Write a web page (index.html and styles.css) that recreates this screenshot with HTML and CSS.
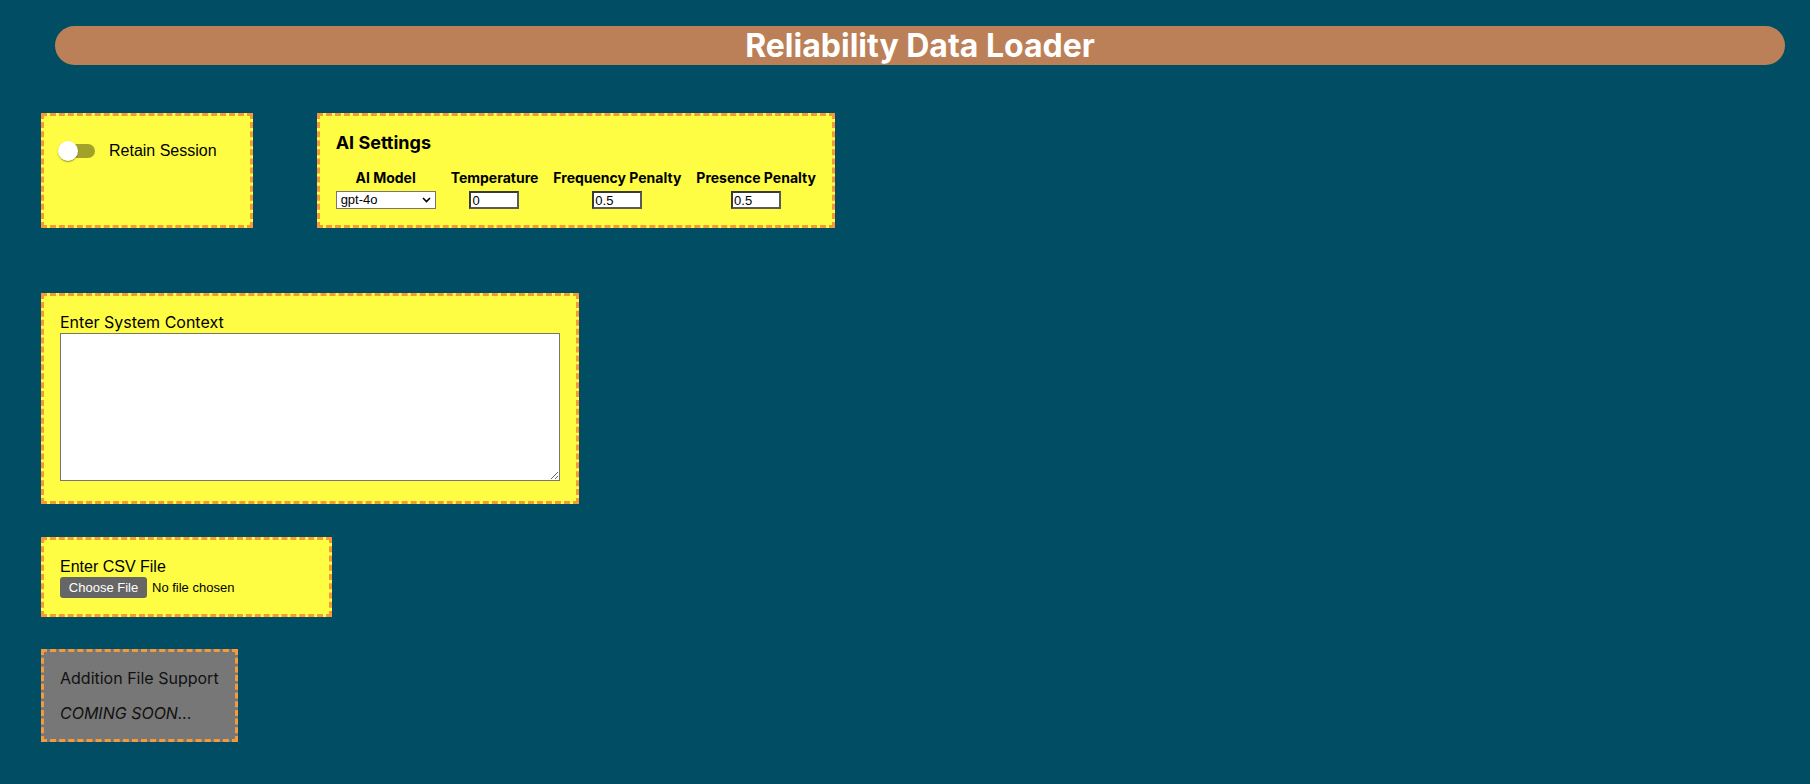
FILE: index.html
```html
<!DOCTYPE html>
<html lang="en">
<head>
<meta charset="utf-8">
<title>Reliability Data Loader</title>
<link rel="stylesheet" href="styles.css">
</head>
<body>
<header class="banner">
  <h1 class="banner-title">Reliability Data Loader</h1>
</header>
<main class="page">
  <div class="top-row">
    <section class="card card-session">
      <label class="switch-label">
        <span class="switch">
          <span class="switch-track"></span>
          <span class="switch-thumb"></span>
        </span>
        <span class="switch-text">Retain Session</span>
      </label>
    </section>
    <section class="card card-ai">
      <h3 class="ai-title">AI Settings</h3>
      <div class="ai-grid">
        <div class="ai-head">AI Model</div>
        <div class="ai-head">Temperature</div>
        <div class="ai-head">Frequency Penalty</div>
        <div class="ai-head">Presence Penalty</div>
        <select class="ai-select"><option>gpt-4o</option></select>
        <input class="ai-input" type="text" value="0">
        <input class="ai-input" type="text" value="0.5">
        <input class="ai-input" type="text" value="0.5">
      </div>
    </section>
  </div>
  <section class="card card-context">
    <div class="context-label">Enter System Context</div>
    <textarea class="context-text"></textarea>
  </section>
  <section class="card card-csv">
    <div class="csv-label">Enter CSV File</div>
    <div class="file-widget">
      <span class="file-button">Choose File</span>
      <span class="file-name">No file chosen</span>
    </div>
  </section>
  <section class="card card-soon">
    <div class="soon-label">Addition File Support</div>
    <p class="soon-text">COMING SOON...</p>
  </section>
</main>
</body>
</html>
```
FILE: styles.css
```css
html, body {
  margin: 0;
  padding: 0;
}
body {
  background: #014e64;
  min-height: 784px;
  font-family: "Inter", "Liberation Sans", sans-serif;
  color: #000;
}
.banner {
  margin: 26px 25px 0 55px;
  background: #bc8058;
  border-radius: 20px;
}
.banner-title {
  margin: 0;
  font-family: "Inter", sans-serif;
  font-weight: 700;
  font-size: 32px;
  line-height: 39px;
  color: #fff;
  text-align: center;
}
.page {
  display: flex;
  flex-direction: column;
  align-items: flex-start;
  padding: 48px 0 0 41px;
}
.top-row {
  display: flex;
  align-items: stretch;
  gap: 64px;
}
.card {
  background: #fefd44;
  border: 3px dashed #f6993a;
  padding: 16px;
}
.card-session {
  display: flex;
  align-items: flex-start;
}
.switch-label {
  display: inline-flex;
  align-items: center;
  margin-left: -11px;
  margin-right: 17px;
  font-family: "Liberation Sans", Arial, sans-serif;
  font-size: 16px;
  line-height: 24px;
}
.switch {
  display: inline-grid;
  width: 58px;
  height: 38px;
  flex: none;
}
.switch-track {
  grid-area: 1 / 1;
  margin: 12px;
  height: 14px;
  border-radius: 7px;
  background: rgba(0, 0, 0, 0.36);
}
.switch-thumb {
  grid-area: 1 / 1;
  justify-self: start;
  align-self: center;
  margin-left: 9px;
  width: 20px;
  height: 20px;
  border-radius: 50%;
  background: #fff;
  box-shadow: 0 2px 1px -1px rgba(0,0,0,0.2), 0 1px 1px 0 rgba(0,0,0,0.14), 0 1px 3px 0 rgba(0,0,0,0.12);
}
.switch-text {
  margin-left: 2px;
}
.ai-title {
  margin: 0 0 15px;
  font-size: 18px;
  line-height: 22px;
  font-weight: 700;
}
.ai-grid {
  display: grid;
  grid-template-columns: repeat(4, auto);
  column-gap: 15px;
  row-gap: 5px;
  justify-items: center;
}
.ai-head {
  font-size: 14px;
  font-weight: 700;
  line-height: 17px;
}
.ai-select {
  appearance: none;
  -webkit-appearance: none;
  box-sizing: border-box;
  width: 100px;
  height: 18px;
  margin: 0;
  padding: 0 4px;
  border: 1px solid #767676;
  border-radius: 0;
  background: #fff url("data:image/svg+xml,%3Csvg xmlns='http://www.w3.org/2000/svg' width='9' height='6' viewBox='0 0 9 6'%3E%3Cpath d='M1 1l3.5 3.5L8 1' fill='none' stroke='%23000' stroke-width='1.6'/%3E%3C/svg%3E") no-repeat right 4px center;
  font-family: "Liberation Sans", Arial, sans-serif;
  font-size: 13px;
  line-height: 16px;
  color: #000;
}
.ai-input {
  box-sizing: border-box;
  width: 50px;
  height: 18px;
  margin: 0;
  padding: 0 1px;
  border: 2px solid #3a3a3a;
  border-right-color: #5a5a5a;
  border-bottom-color: #5a5a5a;
  background: #fff;
  font-family: "Liberation Sans", Arial, sans-serif;
  font-size: 13px;
  color: #000;
}
.context-label {
  font-size: 16px;
  line-height: 21px;
}
.context-text {
  display: block;
  box-sizing: border-box;
  width: 500px;
  height: 148px;
  margin: 0 0 4px;
  border: 1px solid #767676;
  background: #fff;
  resize: both;
}
.card-context {
  margin-top: 65px;
}
.card-csv {
  margin-top: 33px;
  font-family: "Liberation Sans", Arial, sans-serif;
}
.csv-label {
  font-size: 16px;
  line-height: 21px;
}
.file-widget {
  display: flex;
  align-items: center;
  width: 253px;
  height: 21px;
  font-size: 13px;
}
.file-button {
  box-sizing: border-box;
  height: 21px;
  width: 87px;
  display: flex;
  align-items: center;
  justify-content: center;
  background: #666;
  color: #fff;
  border-radius: 3px;
}
.file-name {
  margin-left: 5px;
  color: #000;
}
.card-soon {
  margin-top: 32px;
  background: #777;
  color: #111;
}
.soon-label {
  font-size: 16px;
  line-height: 20px;
}
.soon-text {
  margin: 15px 0 0;
  font-size: 16px;
  line-height: 20px;
  font-style: italic;
}
```
